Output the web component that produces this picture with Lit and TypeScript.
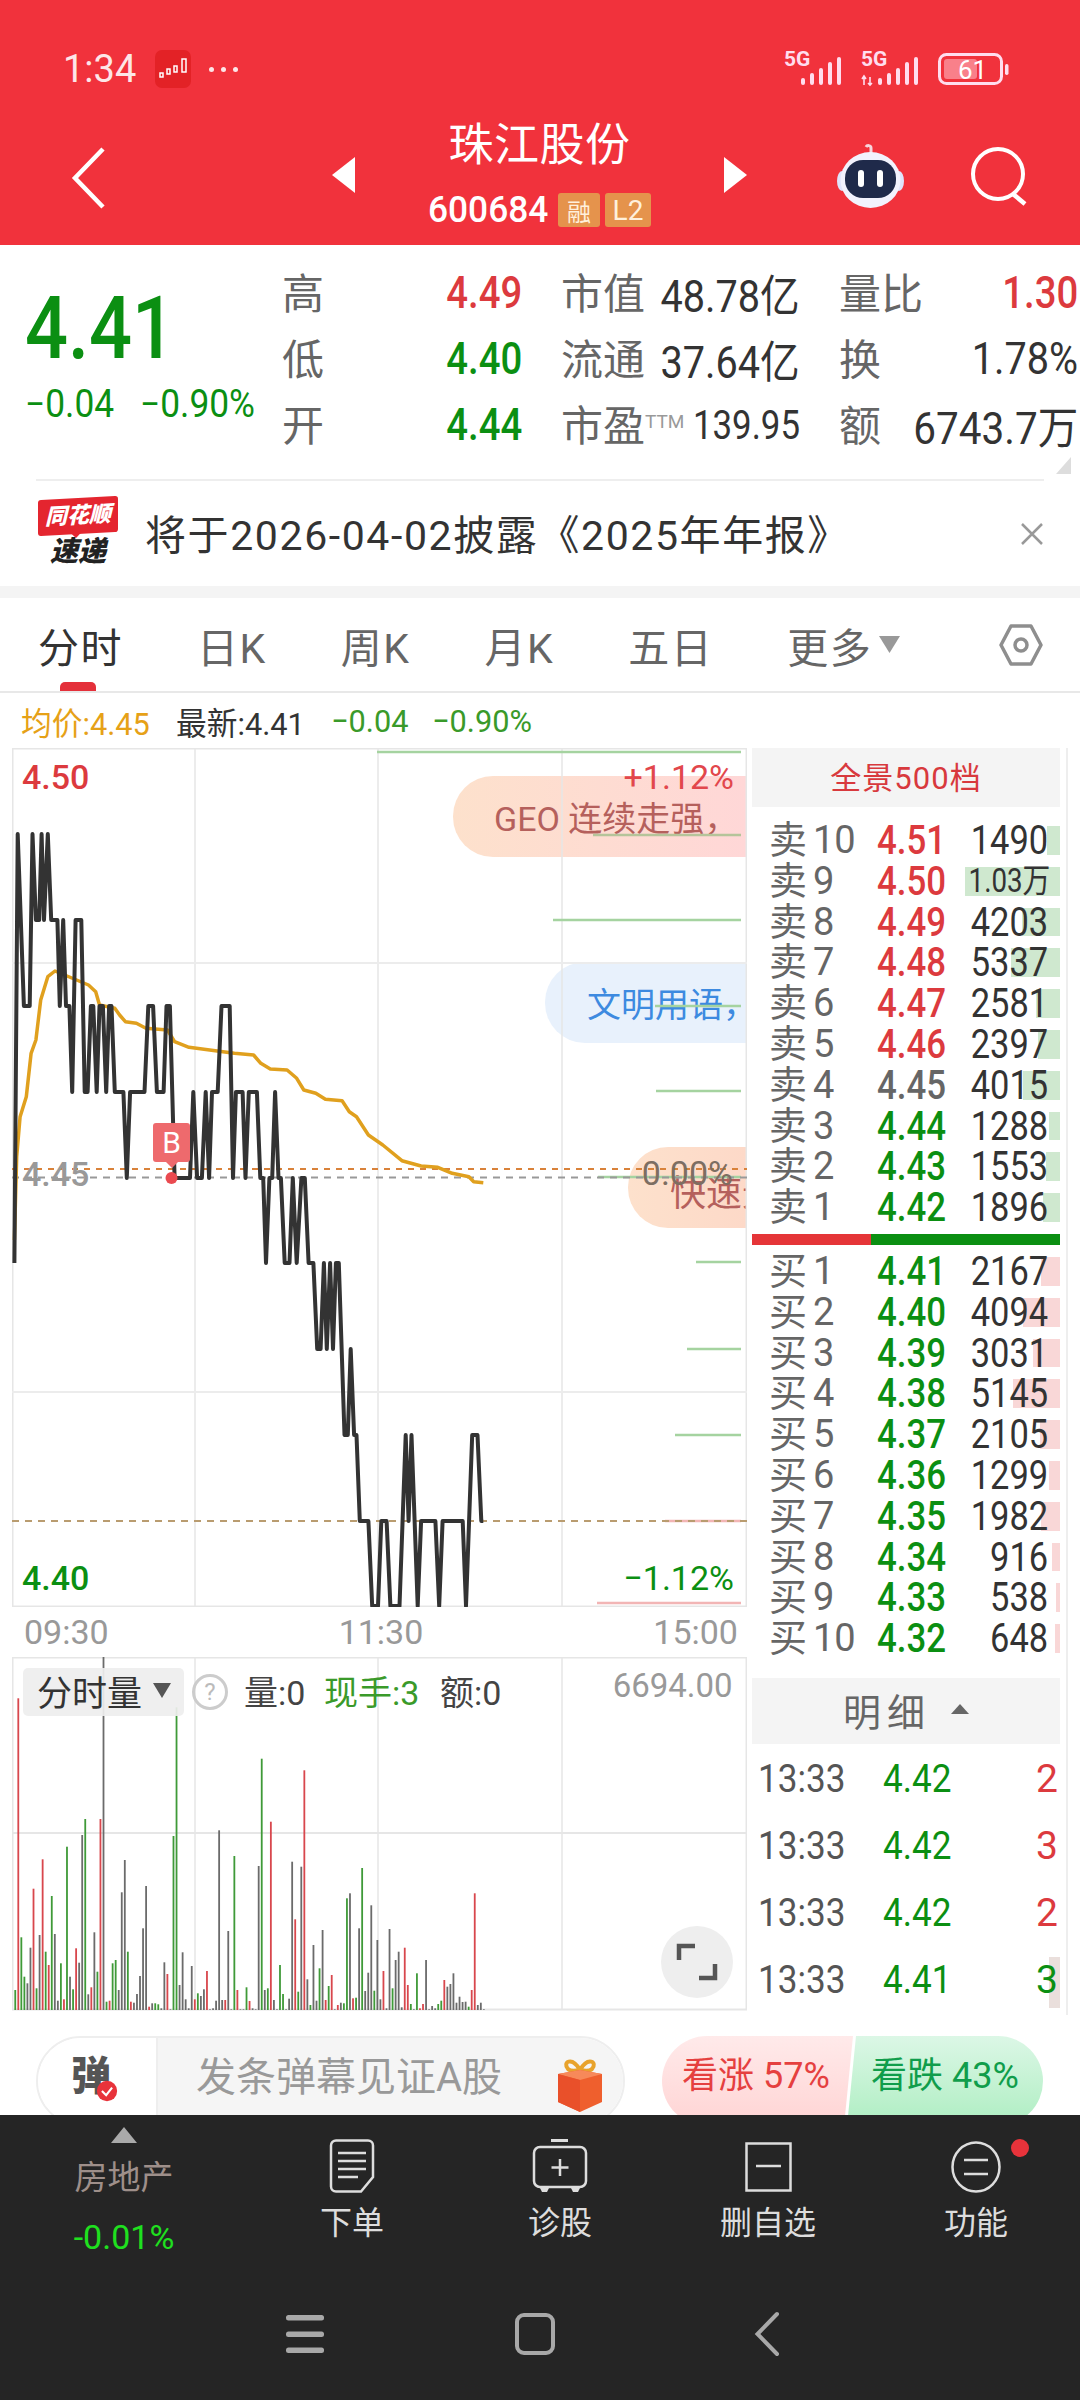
import { LitElement, html, css, svg } from "lit";
import { customElement } from "lit/decorators.js";

const L = [834, 920, 1006, 1092, 1178, 1263, 1349, 1435, 1521, 1606];
// [zoomX, level]
const PRICE: [number, number][] = [[30,5],[37,0],[50,2],[62,2],[68,0],[75,1],[82,1],[87,0],[92,1],[100,0],[107,1],[120,1],[125,2],[132,1],[138,2],[145,2],[151,3],[158,1],[170,1],[177,3],[183,3],[190,2],[195,2],[202,3],[208,2],[215,2],[222,3],[228,2],[233,2],[240,3],[258,3],[265,4],[272,3],[302,3],[310,2],[320,2],[328,3],[342,3],[348,2],[355,2],[365,4],[397,4],[404,3],[412,4],[422,4],[430,3],[437,4],[443,3],[455,3],[463,2],[480,2],[487,4],[493,3],[507,3],[513,4],[520,3],[537,3],[544,4],[550,4],[556,5],[563,4],[569,4],[575,3],[582,4],[587,4],[595,5],[605,5],[612,4],[620,5],[630,4],[637,4],[645,5],[655,5],[663,6],[670,6],[677,5],[683,6],[690,5],[696,6],[702,5],[708,5],[720,7],[727,7],[733,6],[740,7],[745,7],[752,8],[770,8],[778,9],[790,9],[797,8],[808,8],[816,9],[835,9],[848,7],[854,8],[860,7],[873,9],[880,8],[910,8],[918,9],[925,8],[967,8],[974,9],[987,7],[998,7],[1006,8],[1010,8]];
const AVG: [number, number][] = [[30,1500],[35,1250],[42,1130],[55,1070],[65,940],[75,900],[85,780],[100,710],[115,693],[135,705],[160,720],[185,735],[200,755],[208,795],[240,805],[250,825],[262,845],[285,850],[305,865],[350,870],[365,905],[395,922],[450,932],[490,940],[530,945],[545,970],[565,987],[600,990],[620,1015],[635,1050],[660,1060],[680,1078],[715,1082],[730,1115],[745,1130],[770,1185],[800,1215],[840,1262],[880,1278],[915,1282],[945,1300],[980,1310],[990,1325],[1010,1328]];
const pricePts = PRICE.map(([x, l]) => `${(x / 2.09).toFixed(1)},${L[l]}`).join(" ");
const avgPts = AVG.map(([x, y]) => `${(x / 2.09).toFixed(1)},${(740 + y / 3).toFixed(1)}`).join(" ");

const VOL = "g1020 r145 g862 g980 k1000 k893 r716 g1015 k855 r628 g905 r945 g738 k852 k1052 g940 r1048 g590 k980 g1018 r895 k938 k555 g507 k1033 r1012 k847 g965 r507 k20 g1055 r1052 g940 g930 k1020 k727 k630 g905 r1055 k1058 k1032 k978 k835 k708 r1070 k1060 g1060 g1063 k1075 k937 r972 k1078 g558 g172 k1005 k907 k1048 k1075 k948 r1048 g1030 k1038 k1018 r963 k1078 k1075 k1052 k541 k1050 r1050 k843 k1078 g618 r1020 k1078 k1078 g1012 r1053 k1075 k1078 k648 g326 k1020 g1015 r515 k1050 k1078 g945 g1032 k1078 k1046 k635 r808 g1025 k650 r361 k988 g1065 k885 k1052 g955 k840 r1050 g1008 r975 k1078 r1065 k1058 g1060 g745 k730 r1045 g1043 k835 g654 k1023 k968 k766 g1022 k870 k1048 r963 k1075 k837 g1015 k930 k905 k1072 r893 r1005 g1062 k1078 g970 r1075 r1062 k930 k1078 k1068 k1075 g1062 g1052 r990 k1010 k1002 k970 k1058 k1040 k1056 k1055 g1070 r1020 r730 k1065 k1058 k1078".split(" ");
const VOLC: Record<string, string> = { r: "#d8474d", g: "#3f9a38", k: "#6b6b6b" };

const SELL = [["10","4.51","r","1490",13],["9","4.50","r","1.03万",95],["8","4.49","r","4203",38],["7","4.48","r","5337",49],["6","4.47","r","2581",24],["5","4.46","r","2397",22],["4","4.45","k","4015",37],["3","4.44","g","1288",11],["2","4.43","g","1553",14],["1","4.42","g","1896",17]] as const;
const BUY = [["1","4.41","2167",19],["2","4.40","4094",37],["3","4.39","3031",27],["4","4.38","5145",47],["5","4.37","2105",20],["6","4.36","1299",11],["7","4.35","1982",19],["8","4.34","916",8],["9","4.33","538",4],["10","4.32","648",5]] as const;
const TICKS = [["4.42","2"],["4.42","3"],["4.42","2"],["4.41","3"]];
const SUPPORT: [number, number, string][] = [[752,377,"#a5d3a0"],[835,593,"#b5c49a"],[920,553,"#a5d3a0"],[1006,655,"#a5d3a0"],[1091,656,"#a5d3a0"],[1177,598,"#a5d3a0"],[1262,696,"#a5d3a0"],[1349,687,"#a5d3a0"],[1435,675,"#a5d3a0"],[1521,665,"#f2b5b5"],[1603,597,"#f2b5b5"]];

const signal = (extra = false) => html`<svg class="sig" viewBox="0 0 62 32" width="62" height="32">
  <text x="0" y="13" class="sigt">5G</text>
  ${extra ? svg`<path d="M3 32V24M1 26l2-3 2 3M9 24v8M7 30l2 2 2-2" stroke="#fde" stroke-width="1.6" fill="none"/>` : ""}
  <g fill="#fde"><rect x="17" y="25" width="4" height="7" rx="2"/><rect x="26" y="20" width="4" height="12" rx="2"/><rect x="35" y="15" width="4" height="17" rx="2"/><rect x="44" y="9" width="4" height="23" rx="2"/><rect x="53" y="4" width="4" height="28" rx="2"/></g>
</svg>`;

@customElement("app-root")
export class AppRoot extends LitElement {
  static styles = css`
    :host { display: block; width: 1080px; height: 2400px; overflow: hidden; background: #fff;
      font-family: Roboto, "Noto Sans CJK SC", sans-serif; color: #333; }
    * { box-sizing: border-box; }
    svg { display: block; flex: none; overflow: visible; }
    .nx { display: inline-block; transform: scaleX(.87); transform-origin: left center; white-space: nowrap; }
    .nr { display: inline-block; transform: scaleX(.87); transform-origin: right center; white-space: nowrap; }
    .red { color: #dc3a3e; } .green { color: #0b8f12; } .grey { color: #666; }

    .head { height: 245px; background: #f1323c; color: #fff; display: flex; flex-direction: column; }
    .status { height: 110px; padding: 28px 71px 0 63px; display: flex; align-items: center; }
    .time { font-size: 38px; color: #fde6e8; width: 92px; }
    .appic { width: 36px; height: 38px; background: #e32226; border-radius: 7px; display: flex; align-items: center; justify-content: center; }
    .dots { display: flex; gap: 7px; margin-left: 18px; }
    .dots i { width: 5px; height: 5px; border-radius: 50%; background: #fde6e8; }
    .sright { margin-left: auto; display: flex; align-items: center; gap: 15px; }
    .sigt { font: 700 21px Roboto, sans-serif; fill: #fde; }
    .bat { width: 71px; height: 32px; display: block; }
    .nav { flex: 1; display: flex; align-items: center; padding-left: 72px; }
    .nav .tri { margin-top: -5px; }
    .center { width: 369px; height: 135px; display: flex; flex-direction: column; align-items: center; }
    .title { font-size: 45px; line-height: 60px; margin-top: 6px; letter-spacing: .5px; }
    .code { display: flex; align-items: center; margin-top: 16px; font-size: 36px; height: 36px; gap: 5px; }
    .code .num { width: 125px; transform: scaleX(.98); transform-origin: left; font-weight: 500; }
    .badge { height: 34px; background: #e5934c; color: #fff0dc; border-radius: 3px; font-size: 24px; font-weight: 400; display: flex; align-items: center; justify-content: center; }

    .stats { height: 234px; display: flex; padding-top: 15px; }
    .quote { width: 282px; padding-left: 25px; }
    .big { font-size: 88px; line-height: 100px; margin-top: 18px; transform: scaleX(.86); transform-origin: left; font-weight: 500; color: #0b8f12; }
    .chg { display: flex; gap: 25px; margin-top: 4px; font-size: 38px; line-height: 44px; color: #0b8f12; }
    .chg span { width: 90px; }
    .chg .nx { transform: scaleX(.93); }
    .grid { display: grid; grid-template-columns: 240px 239px 239px; column-gap: 39px; grid-auto-rows: 66px; }
    .cell { display: flex; align-items: center; justify-content: space-between; font-size: 42px; color: #666; white-space: nowrap; }
    .cell > span:first-child { padding-bottom: 5px; }
    .val { font-size: 44px; color: #333; font-weight: 400; margin-left: -30px; }
    .val.red { color: #dc3a3e; font-weight: 500; } .val.green { color: #0b8f12; font-weight: 500; }
    .ttm { font-size: 19px; color: #999; vertical-align: 13px; }
    .corner { width: 0; height: 0; border-style: solid; border-width: 0 0 17px 15px; border-color: transparent transparent #ddd transparent; margin: -22px 0 5px 1056px; }

    .rule { height: 2px; background: #eee; margin: 0 36px; }
    .alert { height: 105px; display: flex; align-items: center; padding-left: 38px; }
    .logo { width: 80px; height: 68px; margin-top: -3px; display: flex; flex-direction: column; align-items: center; margin-right: 27px; font-style: italic; font-weight: 900; }
    .logo b { width: 80px; height: 36px; background: #e4252f; color: #fff; border-radius: 3px; font-size: 22px; line-height: 36px; text-align: center; transform: skewY(-3deg); position: relative; }
    .logo b::after { content: ""; position: absolute; left: 32px; top: 34px; border: 6px solid transparent; border-top-color: #e4252f; }
    .logo em { font-size: 28px; line-height: 30px; margin-top: 3px; color: #222; }
    .atxt { font-size: 41px; color: #333; letter-spacing: 1.6px; white-space: nowrap; padding-bottom: 4px; }
    .close { margin-left: auto; margin-right: 37px; }
    .band { height: 12px; background: #f4f4f4; }

    .tabs { height: 95px; display: flex; align-items: center; padding: 0 37px 0 38px; gap: 74px; border-bottom: 2px solid #e8e8e8; font-size: 41px; letter-spacing: 1.5px; color: #666; position: relative; }
    .tabs .on { color: #333; }
    .tabs .on::after { content: ""; position: absolute; left: 60px; bottom: 0; width: 36px; height: 9px; background: #e4303a; border-radius: 5px 5px 0 0; }
    .more { display: flex; align-items: center; gap: 7px; }
    .hex { margin-left: auto; }

    .legend { height: 55px; display: flex; align-items: center; padding-left: 21px; font-size: 32px; white-space: nowrap; }
    .legend > span { display: block; transform: scaleX(.96); }

    .main { height: 1288px; display: flex; overflow: hidden; }
    .left { width: 752px; padding-left: 12px; flex: none; }
    .chart { width: 735px; height: 859px; position: relative; overflow: hidden; }
    .chart > svg, .vol > svg { position: absolute; left: 0; top: 0; }
    .bub { position: absolute; right: 1px; height: 81px; border-radius: 40px 0 0 40px; font-size: 34px; display: flex; align-items: center; white-space: nowrap; overflow: hidden; }
    .b1 { top: 28px; width: 293px; padding-left: 41px; background: linear-gradient(90deg,#fde1cc,#ffd7d7); color: #b5605c; }
    .b2 { top: 214px; width: 201px; padding-left: 42px; background: #e8f1fc; color: #3d8ae0; }
    .b3 { top: 399px; width: 118px; padding: 5px 0 0 42px; background: linear-gradient(90deg,#fde1cc,#fdd9c8); color: #b5605c; font-size: 36px; }
    .lab { position: absolute; font-size: 34px; line-height: 40px; white-space: nowrap; font-weight: 500; }
    .mark { position: absolute; left: 141px; top: 375px; width: 37px; height: 39px; background: #ee6a6d; border-radius: 3px; color: #fff; font-size: 30px; text-align: center; line-height: 39px; }
    .mark::after { content: ""; position: absolute; left: 13px; top: 39px; border: 6px solid transparent; border-top-color: #ee6a6d; border-bottom: 0; }
    .times { height: 50px; display: flex; justify-content: space-between; align-items: center; padding: 0 14px 0 12px; font-size: 34px; color: #999; }
    .vol { width: 735px; height: 354px; position: relative; overflow: hidden; }
    .vtools { position: absolute; left: 11px; top: 11px; display: flex; align-items: center; font-size: 34px; height: 48px; white-space: nowrap; }
    .sel { width: 161px; height: 48px; background: rgba(238,238,238,.92); border-radius: 5px; display: flex; align-items: center; padding: 0 0 3px 14px; font-size: 35px; color: #333; gap: 11px; }
    .q { margin-left: 8px; width: 36px; height: 36px; border: 3px solid #ccc; border-radius: 50%; color: #bbb; font-size: 24px; display: flex; align-items: center; justify-content: center; }
    .vt { margin-left: 16px; color: #444; width: 66px; padding-bottom: 3px; }
    .vmax { position: absolute; right: 14px; top: 8px; font-size: 34px; color: #999; transform: scaleX(.97); transform-origin: right; }
    .full { position: absolute; left: 649px; top: 269px; width: 72px; height: 72px; border-radius: 50%; background: #eee; display: flex; align-items: center; justify-content: center; }

    .right { width: 316px; height: 1267px; border-right: 2px solid #eee; padding-right: 6px; flex: none; }
    .phead { height: 59px; background: #f4f4f4; display: flex; align-items: center; justify-content: center; font-size: 31px; color: #d8393d; letter-spacing: 1px; padding-bottom: 5px; }
    .book { padding-top: 13px; }
    .row { height: 40.8px; position: relative; display: grid; grid-template-columns: 108px 76px 109px; grid-template-rows: 40.8px; line-height: 40.8px; padding: 0 0 0 17px; white-space: nowrap; }
    .row .bar { position: absolute; right: 0; top: 6px; bottom: 6px; }
    .blbl { font-size: 38px; color: #666; position: relative; }
    .blbl i { font-style: normal; margin-right: 6px; }
    .bp { font-size: 41px; position: relative; font-weight: 500; }
    .bp .nx { transform: scaleX(.85); }
    .bv { font-size: 41px; text-align: right; padding-right: 14px; position: relative; color: #333; }
    .bv .nr { transform: scaleX(.84); }
    .bv.sm { font-size: 33px; }
    .split { height: 11px; margin: 6px 0 6px; display: flex; }
    .split i:first-child { width: 119px; background: #e53538; }
    .split i:last-child { flex: 1; background: #0b8f12; }
    .dhead { height: 66px; margin-top: 19px; background: #f4f4f4; display: flex; align-items: center; justify-content: center; font-size: 38px; color: #666; gap: 20px; letter-spacing: 6px; padding-bottom: 3px; }
    .tick { height: 67px; display: grid; grid-template-columns: 125px 1fr auto; padding: 3px 2px 0 6px; align-items: center; font-size: 39px; position: relative; }
    .tick > * { position: relative; }
    .tick .nx { transform: scaleX(.9); }
    .tick .t { color: #555; }
    .tick .tb { position: absolute; right: 0; top: 12px; bottom: 4px; width: 11px; background: #eadfdc; }

    .dan { height: 79px; overflow: hidden; display: flex; padding-left: 36px; background: #fff; }
    .pill { width: 589px; height: 90px; border: 2px solid #eee; border-radius: 45px; display: flex; overflow: hidden; flex: none; }
    .dl { width: 120px; background: #fff; border-right: 2px solid #eee; padding-left: 33px; display: flex; align-items: center; position: relative; font-size: 40px; font-weight: 900; color: #555; height: 90px; padding-bottom: 20px; }
    .dr { flex: 1; background: #f5f5f5; display: flex; align-items: flex-start; padding: 0 0 0 38px; font-size: 40px; color: #999; }
    .dr span { line-height: 80px; }
    .dr svg { margin: 22px 0 0 54px; }
    .vote { margin-left: 37px; width: 381px; height: 90px; display: flex; border-radius: 45px; overflow: hidden; font-size: 36px; white-space: nowrap; }
    .up { width: 191px; padding-left: 20px; line-height: 80px; background: linear-gradient(180deg,#ffeaea,#ffd4d4); color: #e5403f; clip-path: polygon(0 0,100% 0,calc(100% - 9px) 100%,0 100%); margin-right: -6px; }
    .down { flex: 1; padding-left: 24px; line-height: 80px; background: linear-gradient(180deg,#dcf7e6,#aeeec2); color: #109d4b; clip-path: polygon(9px 0,100% 0,100% 100%,0 100%); }

    .dock { height: 285px; background: #252525; display: flex; flex-direction: column; }
    .dgrid { height: 178px; display: grid; grid-template-columns: 248px repeat(4, 208px); }
    .sect { display: flex; flex-direction: column; align-items: center; padding-top: 12px; }
    .sect .tr { width: 0; height: 0; border: 13px solid transparent; border-top: 0; border-bottom: 16px solid #aaa; }
    .sect .nm { font-size: 33px; color: #9e8f8a; line-height: 44px; margin-top: 13px; }
    .sect .pc { font-size: 34px; color: #1fe01f; line-height: 44px; margin-top: 15px; }
    .act { display: flex; flex-direction: column; align-items: center; padding-top: 24px; color: #ddd; font-size: 32px; position: relative; }
    .act .ic { height: 54px; }
    .act span { line-height: 44px; margin-top: 8px; }
    .sys { flex: 1; display: flex; align-items: flex-start; padding: 20px 0 0 286px; }
  `;

  private bookRow(side: string, n: string, price: string, cls: string, vol: string, w: number, bar: string) {
    const small = vol.includes("万");
    return html`<div class="row">
      <div class="bar" style="width:${w}px;background:${bar}"></div>
      <span class="blbl"><i>${side}</i>${n}</span>
      <span class="bp ${cls}"><span class="nx">${price}</span></span>
      <span class="bv ${small ? "sm" : ""}"><span class="nr">${vol}</span></span>
    </div>`;
  }

  render() {
    return html`
      <div class="head">
        <div class="status">
          <span class="time">1:34</span>
          <span class="appic"><svg width="30" height="26" viewBox="0 0 30 26"><g fill="none" stroke="#fff" stroke-width="1.5"><rect x="2" y="17" width="3" height="4"/><rect x="9" y="13" width="3" height="5"/><rect x="16" y="10" width="3" height="6"/><rect x="24" y="3" width="4" height="13"/></g></svg></span>
          <span class="dots"><i></i><i></i><i></i></span>
          <span class="sright">
            ${signal()}${signal(true)}
            <svg class="bat" viewBox="0 0 71 32"><rect x="1.5" y="1.5" width="62" height="29" rx="7" fill="none" stroke="#fde" stroke-width="3"/><rect x="6" y="6" width="33" height="20" rx="3" fill="#f9808a"/><rect x="67" y="11" width="3.5" height="11" rx="1.7" fill="#fde"/><text x="20" y="26" font-family="Roboto" font-size="26" fill="#fff">61</text></svg>
          </span>
        </div>
        <div class="nav">
          <svg width="33" height="62" viewBox="0 0 33 62"><path d="M31 2 3 31l28 29" fill="none" stroke="#fff" stroke-width="4.5"/></svg>
          <svg class="tri" style="margin-left:227px" width="23" height="36" viewBox="0 0 23 36"><path d="M23 0v36L0 18z" fill="#fff"/></svg>
          <div class="center">
            <div class="title">珠江股份</div>
            <div class="code"><span class="num">600684</span><span class="badge" style="width:42px">融</span><span class="badge" style="width:46px;font-size:28px">L2</span></div>
          </div>
          <svg class="tri" width="23" height="36" viewBox="0 0 23 36"><path d="M0 0v36l23-18z" fill="#fff"/></svg>
          <svg style="margin-left:90px;margin-top:-4px" width="67" height="65" viewBox="0 0 67 65">
            <path d="M34 12V5c0-3-4-3-5-1" fill="none" stroke="#f7d5dc" stroke-width="3"/>
            <ellipse cx="5" cy="38" rx="5" ry="10" fill="#dfe3fb"/><ellipse cx="62" cy="38" rx="5" ry="10" fill="#dfe3fb"/>
            <ellipse cx="33.500" cy="37" rx="30" ry="28" fill="#f2f2fd"/>
            <rect x="8" y="17" width="51" height="38" rx="18" fill="#1f2a4a"/>
            <rect x="21" y="27" width="6" height="17" rx="3" fill="#fff"/><rect x="40" y="27" width="6" height="17" rx="3" fill="#fff"/>
          </svg>
          <svg style="margin-left:67px;margin-top:-4px" width="57" height="58" viewBox="0 0 57 58"><circle cx="27" cy="27" r="25" fill="none" stroke="#fff" stroke-width="4"/><path d="M42 47l12 10" stroke="#fff" stroke-width="4.500"/></svg>
        </div>
      </div>

      <div class="stats">
        <div class="quote">
          <div class="big">4.41</div>
          <div class="chg"><span><span class="nx">−0.04</span></span><span style="width:auto"><span class="nx">−0.90%</span></span></div>
        </div>
        <div class="grid">
          <div class="cell"><span>高</span><span class="val red"><span class="nr">4.49</span></span></div>
          <div class="cell"><span>市值</span><span class="val"><span class="nr" style="transform:scaleX(.9)">48.78亿</span></span></div>
          <div class="cell"><span>量比</span><span class="val red"><span class="nr">1.30</span></span></div>
          <div class="cell"><span>低</span><span class="val green"><span class="nr">4.40</span></span></div>
          <div class="cell"><span>流通</span><span class="val"><span class="nr" style="transform:scaleX(.9)">37.64亿</span></span></div>
          <div class="cell"><span>换</span><span class="val"><span class="nr" style="transform:scaleX(.9)">1.78%</span></span></div>
          <div class="cell"><span>开</span><span class="val green"><span class="nr">4.44</span></span></div>
          <div class="cell"><span>市盈<span class="ttm">TTM</span></span><span class="val" style="font-size:40px"><span class="nr" style="transform:scaleX(.87)">139.95</span></span></div>
          <div class="cell"><span>额</span><span class="val"><span class="nr" style="transform:scaleX(.92)">6743.7万</span></span></div>
        </div>
      </div>
      <div class="corner"></div>
      <div class="rule"></div>

      <div class="alert">
        <div class="logo"><b>同花顺</b><em>速递</em></div>
        <span class="atxt">将于2026-04-02披露《2025年年报》</span>
        <svg class="close" width="22" height="22" viewBox="0 0 22 22"><path d="M1 1l20 20M21 1 1 21" stroke="#999" stroke-width="2.500"/></svg>
      </div>
      <div class="band"></div>

      <div class="tabs">
        <span class="on">分时</span><span>日K</span><span>周K</span><span>月K</span><span>五日</span>
        <span class="more">更多<svg width="21" height="17" viewBox="0 0 21 17"><path d="M0 0h21L10.500 17z" fill="#999"/></svg></span>
        <svg class="hex" width="44" height="44" viewBox="0 0 44 44"><path d="M12 3h20l10 19-10 19H12L2 22z" fill="none" stroke="#8e8e8e" stroke-width="3.500" stroke-linejoin="round"/><circle cx="22" cy="22" r="6" fill="none" stroke="#8e8e8e" stroke-width="3.500"/></svg>
      </div>

      <div class="legend">
        <span class="nx" style="color:#e6a117;width:155px">均价:4.45</span>
        <span class="nx" style="color:#333;width:155px">最新:4.41</span>
        <span class="nx" style="color:#3a9a2a;width:101px">−0.04</span>
        <span class="nx" style="color:#3a9a2a">−0.90%</span>
      </div>

      <div class="main">
        <div class="left">
          <div class="chart">
            <div class="bub b1">GEO 连续走强，</div>
            <div class="bub b2">文明用语，</div>
            <div class="bub b3">快速无</div>
            <svg width="735" height="859" viewBox="12 748 735 859">
              <rect x="12.500" y="748.500" width="734" height="858" fill="none" stroke="#e6e6e6" stroke-width="2"/>
              ${[195, 378, 562].map((x) => svg`<line x1=${x} x2=${x} y1="748" y2="1607" stroke="#e6e6e6" stroke-width="1.500"/>`)}
              ${[963, 1392].map((y) => svg`<line x1="12" x2="747" y1=${y} y2=${y} stroke="#ececec" stroke-width="2"/>`)}
              ${SUPPORT.map(([y, x, c]) => svg`<line x1=${x} x2="741" y1=${y} y2=${y} stroke=${c} stroke-width="2.500"/>`)}
              <line x1="12" x2="747" y1="1169" y2="1169" stroke="#d9823a" stroke-width="2" stroke-dasharray="6 6"/>
              <line x1="12" x2="747" y1="1177.500" y2="1177.500" stroke="#999" stroke-width="2" stroke-dasharray="7 6"/>
              <line x1="12" x2="747" y1="1521" y2="1521" stroke="#b99c70" stroke-width="2" stroke-dasharray="7 6"/>
              <polyline points=${avgPts} fill="none" stroke="#e0a01e" stroke-width="3.500" stroke-linejoin="round"/>
              <polyline points=${pricePts} fill="none" stroke="#333" stroke-width="4" stroke-linejoin="round"/>
              <circle cx="171.500" cy="1178" r="6" fill="#ea4a50"/>
            </svg>
            <div class="mark">B</div>
            <span class="lab red" style="left:10px;top:9px">4.50</span>
            <span class="lab" style="right:13px;top:9px;color:#e2474c;font-weight:400">+1.12%</span>
            <span class="lab" style="left:10px;top:406px;color:#999">4.45</span>
            <span class="lab" style="right:14px;top:405px;color:#7d6e62;font-weight:400">0.00%</span>
            <span class="lab green" style="left:10px;top:810px">4.40</span>
            <span class="lab green" style="right:13px;top:810px;font-weight:400">−1.12%</span>
          </div>
          <div class="times"><span>09:30</span><span>11:30</span><span>15:00</span></div>
          <div class="vol">
            <svg width="735" height="354" viewBox="12 1657 735 354">
              <rect x="12.500" y="1657.500" width="734" height="352" fill="none" stroke="#e6e6e6" stroke-width="2"/>
              ${[195, 378, 562].map((x) => svg`<line x1=${x} x2=${x} y1="1657" y2="2010" stroke="#e6e6e6" stroke-width="1.500"/>`)}
              <line x1="12" x2="747" y1="1833" y2="1833" stroke="#e6e6e6" stroke-width="2"/>
              ${VOL.map((v, i) => {
                const x = 14.35 + 3.043 * i;
                const top = 1650 + Number(v.slice(1)) / 3;
                return svg`<rect x=${x.toFixed(2)} y=${top.toFixed(1)} width="1.800" height=${(2010 - top).toFixed(1)} fill=${VOLC[v[0]]}/>`;
              })}
            </svg>
            <div class="vtools">
              <div class="sel">分时量<svg width="18" height="15" viewBox="0 0 18 15"><path d="M0 0h18L9 15z" fill="#555"/></svg></div>
              <div class="q">?</div>
              <span class="vt">量:0</span>
              <span class="vt" style="margin-left:14px;width:102px;color:#3a9a2a">现手:3</span>
              <span class="vt" style="margin-left:14px">额:0</span>
            </div>
            <span class="vmax">6694.00</span>
            <div class="full"><svg width="40" height="38" viewBox="0 0 40 38"><path d="M2 17V3h16M38 21v14H22" fill="none" stroke="#555" stroke-width="4.500"/></svg></div>
          </div>
        </div>
        <div class="right">
          <div class="phead">全景500档</div>
          <div class="book">
            ${SELL.map((r) => this.bookRow("卖", r[0], r[1], r[2] === "r" ? "red" : r[2] === "g" ? "green" : "grey", r[3], r[4], "#cfe8cf"))}
            <div class="split"><i></i><i></i></div>
            ${BUY.map((r) => this.bookRow("买", r[0], r[1], "green", r[2], r[3], "#f9d7d7"))}
          </div>
          <div class="dhead">明细<svg width="18" height="10" viewBox="0 0 18 10"><path d="M0 10h18L9 0z" fill="#666"/></svg></div>
          ${TICKS.map((t, i) => html`<div class="tick">
            ${i === 3 ? html`<i class="tb"></i>` : ""}
            <span class="t"><span class="nx">13:33</span></span>
            <span class="green"><span class="nx">${t[0]}</span></span>
            <span class=${i === 3 ? "green" : "red"}>${t[1]}</span>
          </div>`)}
        </div>
      </div>

      <div class="dan">
        <div class="pill">
          <div class="dl">弹<svg style="position:absolute;left:58px;top:42px" width="22" height="22" viewBox="0 0 26 26"><circle cx="13" cy="13" r="12" fill="#e8333b"/><path d="M7 13l5 5 7-9" fill="none" stroke="#fff" stroke-width="2.500"/></svg></div>
          <div class="dr"><span>发条弹幕见证A股</span>
            <svg width="48" height="52" viewBox="0 0 48 52">
              <path d="M24 10C16-4 6 2 12 9c2 2 7 2 12 1zm0 0C32-4 42 2 36 9c-2 2-7 2-12 1z" fill="none" stroke="#e8a32c" stroke-width="4"/>
              <path d="M2 14l22-4 22 4v28L24 52 2 42z" fill="#ef5f2d"/><path d="M2 14l22 6 22-6-22-4z" fill="#f7895a"/><path d="M24 20v32L2 42V14z" fill="#e9502a"/>
            </svg>
          </div>
        </div>
        <div class="vote">
          <div class="up">看涨 57%</div>
          <div class="down">看跌 43%</div>
        </div>
      </div>

      <div class="dock">
        <div class="dgrid">
          <div class="sect"><i class="tr"></i><span class="nm">房地产</span><span class="pc">-0.01%</span></div>
          <div class="act"><svg class="ic" width="46" height="54" viewBox="0 0 46 54"><path d="M7 1.500h32a5 5 0 0 1 5 5V38L32 52.500H7a5 5 0 0 1-5-5v-41a5 5 0 0 1 5-5z" fill="none" stroke="#ddd" stroke-width="2.500"/><path d="M9 14h28M9 22h28M9 30h28M9 38h20" stroke="#ddd" stroke-width="2.500"/></svg><span>下单</span></div>
          <div class="act"><svg class="ic" width="56" height="54" viewBox="0 0 56 54"><path d="M19 1.500h17" stroke="#ddd" stroke-width="3"/><rect x="2" y="8" width="52" height="40" rx="6" fill="none" stroke="#ddd" stroke-width="2.500"/><path d="M28 20v17M19.500 28.500h17" stroke="#ddd" stroke-width="2.500"/><path d="M8 49h9l-2 4H10zM39 49h9l-2 4h-5z" fill="#ddd"/></svg><span>诊股</span></div>
          <div class="act"><svg class="ic" width="47" height="54" viewBox="0 0 47 54"><rect x="1.500" y="4.500" width="44" height="47" fill="none" stroke="#ddd" stroke-width="2.500"/><path d="M11 27h25" stroke="#ddd" stroke-width="2.500"/></svg><span>删自选</span></div>
          <div class="act"><svg class="ic" width="50" height="54" viewBox="0 0 50 54"><ellipse cx="25" cy="28" rx="23.500" ry="24.500" fill="none" stroke="#ddd" stroke-width="2.500"/><path d="M13 21h24M13 35h24" stroke="#ddd" stroke-width="2.500"/><circle cx="69" cy="9" r="9" fill="#e8333b"/></svg><span>功能</span></div>
        </div>
        <div class="sys">
          <svg width="38" height="42" viewBox="0 0 38 42"><g fill="#a8a8a8"><rect y="2" width="38" height="5.500" rx="2.500"/><rect y="18.500" width="38" height="5.500" rx="2.500"/><rect y="34.500" width="38" height="5.500" rx="2.500"/></g></svg>
          <svg style="margin-left:191px" width="40" height="42" viewBox="0 0 40 42"><rect x="2" y="2" width="36" height="38" rx="7" fill="none" stroke="#a8a8a8" stroke-width="4"/></svg>
          <svg style="margin-left:199px" width="25" height="42" viewBox="0 0 25 42"><path d="M23 1 3.500 21 23 41" fill="none" stroke="#a8a8a8" stroke-width="4" stroke-linecap="round"/></svg>
        </div>
      </div>
    `;
  }
}
